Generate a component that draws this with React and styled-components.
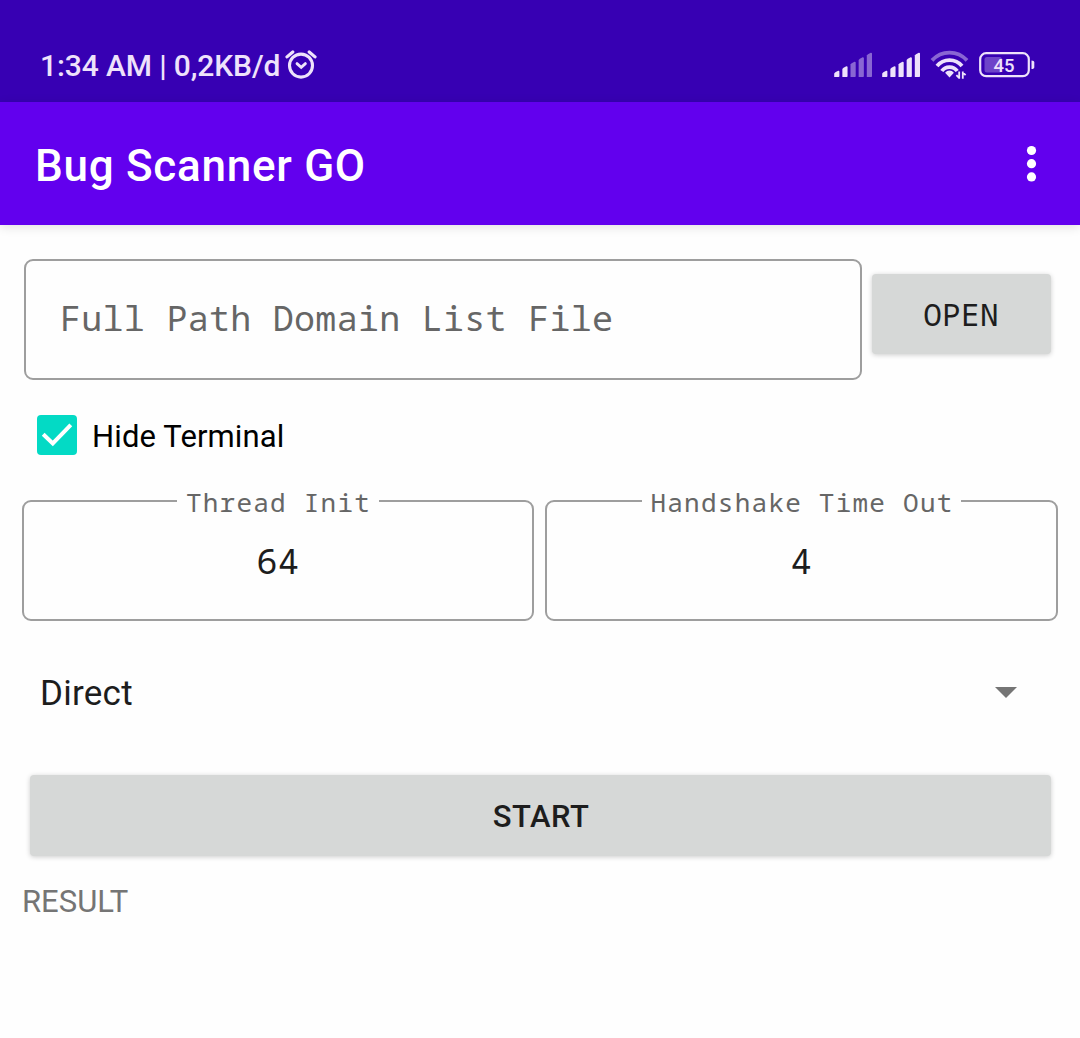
import React from "react";
import styled, { createGlobalStyle } from "styled-components";

const sans = 'Roboto, "Noto Sans", sans-serif';
const mono = '"Droid Sans Mono", "Noto Sans Mono", "Liberation Mono", monospace';

const GlobalStyle = createGlobalStyle`
  * { box-sizing: border-box; }
  body { margin: 0; background: #fefefe; }
`;

const Screen = styled.div`
  display: flex;
  flex-direction: column;
  width: 1080px;
  height: 1038px;
  overflow: hidden;
  background: #fefefe;
  font-family: ${sans};
`;

const StatusBar = styled.div`
  display: flex;
  align-items: center;
  justify-content: space-between;
  height: 102px;
  padding: 28px 45px 0 40px;
  background: #3700b3;
  color: #eee2fb;
`;

const StatusGroup = styled.div`
  display: flex;
  align-items: center;
  gap: ${(p) => p.$gap}px;
`;

const Clock = styled.span`
  padding-top: 2px;
  font-size: 30px;
  line-height: 36px;
  font-weight: 500;
  letter-spacing: -0.12px;
  white-space: pre;
`;

const AppBar = styled.header`
  display: flex;
  align-items: center;
  justify-content: space-between;
  height: 123px;
  flex: none;
  padding: 5px 38px 0 35px;
  background: #6200ee;
  color: #fff;
  box-shadow: 0 2px 10px rgba(0, 0, 0, 0.12);
`;

const Title = styled.h1`
  margin: 0;
  font-size: 44px;
  line-height: 52px;
  font-weight: 500;
  letter-spacing: 0.72px;
`;

const MenuButton = styled.button`
  display: grid;
  place-items: center;
  width: 21px;
  height: 40px;
  margin-top: -5px;
  padding: 0;
  border: 0;
  background: none;
`;

const Content = styled.main`
  display: flex;
  flex-direction: column;
  padding: 34px 22px 0;
`;

const FileRow = styled.div`
  display: flex;
  align-items: flex-start;
  gap: 10px;
  padding-left: 2px;
`;

const PathField = styled.div`
  display: flex;
  align-items: center;
  width: 838px;
  height: 121px;
  padding: 0 0 5px 34px;
  border: 2px solid #9e9e9e;
  border-radius: 9px;
  color: #666;
  font-family: ${mono};
  font-size: 35px;
  letter-spacing: 0.28px;
  white-space: pre;
`;

const Button = styled.button`
  width: ${(p) => p.$width}px;
  height: ${(p) => p.$height}px;
  margin: ${(p) => p.$margin};
  padding: ${(p) => p.$padding || "0"};
  border: 0;
  border-radius: 4px;
  background: #d6d8d7;
  color: #1d1d1d;
  font: ${(p) => (p.$mono ? `400 31px ${mono}` : `500 31px ${sans}`)};
  letter-spacing: ${(p) => p.$spacing}px;
  box-shadow: 0 1px 5px rgba(0, 0, 0, 0.2);
`;

const CheckRow = styled.label`
  display: flex;
  align-items: center;
  gap: 15px;
  height: 40px;
  margin: 35px 0 0 15px;
  color: #000;
  font-size: 31px;
  letter-spacing: 0.12px;
`;

const CheckBox = styled.span`
  display: grid;
  width: 40px;
  height: 40px;
  border-radius: 4px;
  background: #03dac5;
`;

const CheckLabel = styled.span`
  padding-top: 2px;
`;

const FieldRow = styled.div`
  display: flex;
  gap: 11px;
  margin-top: 33px;
`;

const Outlined = styled.fieldset`
  width: ${(p) => p.$width}px;
  height: 133px;
  margin: 0;
  padding: 0;
  min-width: 0;
  border: 2px solid #9e9e9e;
  border-radius: 9px;
  text-align: center;
  color: #1d1d1d;
  font-family: ${mono};
  font-size: 35px;
`;

const Legend = styled.legend`
  width: ${(p) => p.$width}px;
  height: 26px;
  margin: 0 auto;
  padding: 1px 0 0 1px;
  color: #666;
  font-size: 26px;
  line-height: 26px;
  letter-spacing: 1.24px;
  text-align: center;
  white-space: pre;
`;

const Value = styled.div`
  margin-top: 25px;
  line-height: 44px;
  letter-spacing: 0.4px;
`;

const Select = styled.div`
  display: flex;
  align-items: center;
  justify-content: space-between;
  height: 60px;
  margin-top: 42px;
  padding: 0 41.5px 0 18px;
  color: #1d1d1d;
  font-size: 35px;
  letter-spacing: 0.25px;

  svg {
    margin-top: -1px;
  }
`;

const Result = styled.div`
  margin-top: 28px;
  color: #757575;
  font-size: 31px;
  line-height: 36px;
`;

function Signal({ dim }) {
  const bars = [0, 1, 2, 3, 4];
  return (
    <svg width="38" height="26" viewBox="0 0 38 26">
      {bars.map((i) => {
        const x = 0.2 + i * 8.15;
        const top = 18.6 - i * 4.5;
        return (
          <path
            key={i}
            d={`M${x} 25V${top + 3}Q${x + 0.3} ${top + 1.8} ${x + 4} ${top + 0.1}Q${x + 5.2} ${top} ${x + 5.2} ${top + 1}V24.2Q${x + 5.2} 25 ${x + 4.4} 25Z`}
            fill="#eee2fb"
            opacity={dim && i > 1 ? 0.45 : 1}
          />
        );
      })}
    </svg>
  );
}

function Wifi() {
  return (
    <svg width="39" height="30" viewBox="-1 0 39 30" fill="none" stroke="#eee2fb" strokeWidth="3.8">
      <path d="M1 10.4C10.5 0 26.5 0 36 10.4" opacity="0.45" />
      <path d="M6 16C12.5 8.2 24.5 8.2 31 16" />
      <path d="M10.8 21C14.5 15.8 22.5 15.8 26.2 21" />
      <path d="M18.5 20.6q2.6 0 4.4 2.2l-4.4 4.8-4.4-4.8q1.8-2.2 4.4-2.2z" fill="#eee2fb" stroke="none" />
      <path d="M28.2 21.5v7.3M28.2 28l-2.8-2.8M31.8 28.8v-7.3M31.8 22.4l2.8 2.8" strokeWidth="1.8" />
    </svg>
  );
}

function Battery() {
  return (
    <svg width="56" height="26" viewBox="0 0 56 26">
      <rect x="1.2" y="1.2" width="48.6" height="23" rx="6" fill="none" stroke="#eee2fb" strokeWidth="2.2" />
      <rect x="5.5" y="5" width="17.5" height="15.5" rx="2.5" fill="#eee2fb" opacity="0.3" />
      <path d="M52.5 8.5q2.8 0 2.8 2v4.5q0 2-2.8 2z" fill="#eee2fb" />
      <text x="25" y="19.5" textAnchor="middle" fontFamily={sans} fontSize="18.5" fontWeight="500" fill="#eee2fb">
        45
      </text>
    </svg>
  );
}

function Alarm() {
  return (
    <svg width="32" height="30" viewBox="0 0 32 30" fill="none" stroke="#eee2fb" strokeLinecap="round">
      <circle cx="16" cy="15.6" r="11.5" strokeWidth="3.1" />
      <path d="M2 6.9l5.8-4.9M30 6.9l-5.8-4.9" strokeWidth="3.2" />
      <path d="M12 13.6l4.2 3.8 4.2-3.8" strokeWidth="2.8" />
    </svg>
  );
}

export default function App() {
  return (
    <Screen>
      <GlobalStyle />
      <StatusBar>
        <StatusGroup $gap={5}>
          <Clock>1:34 AM | 0,2KB/d</Clock>
          <Alarm />
        </StatusGroup>
        <StatusGroup $gap={10}>
          <Signal dim />
          <Signal />
          <Wifi />
          <Battery />
        </StatusGroup>
      </StatusBar>
      <AppBar>
        <Title>Bug Scanner GO</Title>
        <MenuButton aria-label="More options">
          <svg width="11" height="38" viewBox="0 0 11 38" fill="#fff">
            <circle cx="5.5" cy="5.5" r="4.6" />
            <circle cx="5.5" cy="18.7" r="4.6" />
            <circle cx="5.5" cy="31.9" r="4.6" />
          </svg>
        </MenuButton>
      </AppBar>
      <Content>
        <FileRow>
          <PathField>Full Path Domain List File</PathField>
          <Button $mono $width={179} $height={80} $margin="15px 0 0" $padding="0 1px 0 0" $spacing={0.3}>
            OPEN
          </Button>
        </FileRow>
        <CheckRow>
          <CheckBox>
            <svg width="40" height="40" viewBox="0 0 40 40" fill="none" stroke="#fff" strokeWidth="4">
              <path d="M6.2 19.2l9.6 9.2L33.8 9.8" />
            </svg>
          </CheckBox>
          <CheckLabel>Hide Terminal</CheckLabel>
        </CheckRow>
        <FieldRow>
          <Outlined $width={512}>
            <Legend $width={202}>Thread Init</Legend>
            <Value>64</Value>
          </Outlined>
          <Outlined $width={513}>
            <Legend $width={319}>Handshake Time Out</Legend>
            <Value>4</Value>
          </Outlined>
        </FieldRow>
        <Select>
          Direct
          <svg width="22" height="11" viewBox="0 0 22 11">
            <path d="M0 0h22L11 11z" fill="#757575" />
          </svg>
        </Select>
        <Button $width={1021} $height={81} $margin="52px 0 0 7.5px" $padding="2px 0 0 2px" $spacing={0.5}>
          START
        </Button>
        <Result>RESULT</Result>
      </Content>
    </Screen>
  );
}
